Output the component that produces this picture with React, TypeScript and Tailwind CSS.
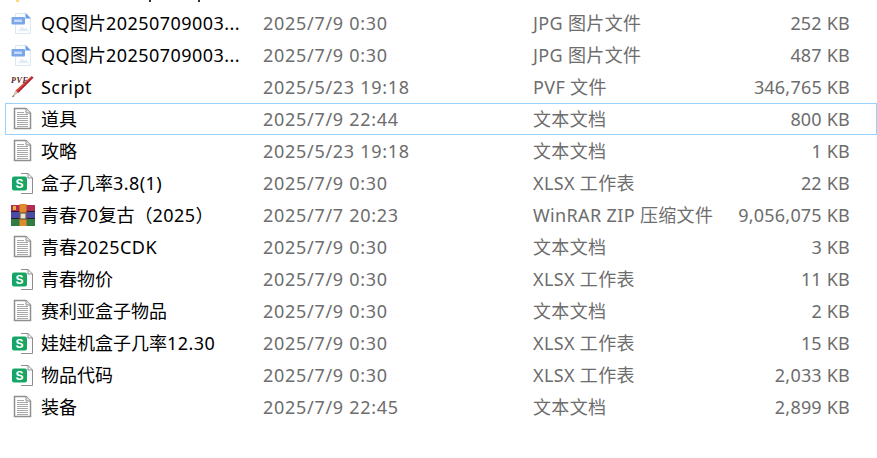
import type { ReactNode } from 'react';

function JpgIcon() {
  return (
    <svg width="24" height="24" viewBox="0 0 24 24">
      <path d="M4.5 2.5H15L19.5 7V22.5H4.5Z" fill="#fbfdff" stroke="#dbe7f6" />
      <path d="M14.5 2L20 7.5H14.5Z" fill="#6f9fe3" />
      <rect x="0.5" y="6" width="13.5" height="7.5" rx="1" fill="#7aa6ea" />
      <rect x="3" y="8.5" width="8" height="2.5" fill="#c7dafa" />
      <path d="M7 20L11 15.5L13.5 18L15 16.5L18 20Z" fill="#e2ecf9" />
    </svg>
  );
}

function PvfIcon() {
  return (
    <svg width="24" height="24" viewBox="0 0 24 24">
      <path d="M22.5 2.5L7 18L4.5 15.5L20.5 1Z" fill="#d8403c" />
      <path d="M22.5 2.5L7 18L6 17L21.5 1.8Z" fill="#a8282a" />
      <path d="M4.5 15.5L7 18L1 22.5Z" fill="#d4c0aa" />
      <path d="M1 22.5L2.3 20L3.5 21.2Z" fill="#666" />
      <text x="0" y="8" fontSize="8" letterSpacing="0.6" fontFamily="Liberation Serif, serif" fontStyle="italic" fontWeight="700" fill="#5a1c1c">
        PVF
      </text>
    </svg>
  );
}

function TextIcon() {
  return (
    <svg width="24" height="24" viewBox="0 0 24 24">
      <path d="M3.5 1.5H15L19.5 6V21.5H3.5Z" fill="#fff" stroke="#8f8f8f" strokeWidth="1.5" />
      <path d="M15 1.5V6H19.5" fill="#e6e6e6" stroke="#8f8f8f" />
      <path d="M6 5.5H13M6 7.5H17M6 9.5H17M6 11.5H17M6 13.5H17M6 15.5H17M6 17.5H17M6 19.5H17" stroke="#a8a8a8" />
    </svg>
  );
}

function SheetIcon() {
  return (
    <svg width="24" height="24" viewBox="0 0 24 24">
      <path d="M10 2.5H17L21.5 7V22.5H10" fill="#fff" stroke="#8d8d8d" />
      <path d="M17 2.5V7H21.5" fill="none" stroke="#8d8d8d" />
      <rect x="1" y="5.5" width="15" height="14" rx="2" fill="#17a566" />
      <text x="8.5" y="17" textAnchor="middle" fontSize="12" fontWeight="700" fontFamily="Liberation Sans, sans-serif" fill="#fff">
        S
      </text>
    </svg>
  );
}

function RarIcon() {
  return (
    <svg width="24" height="24" viewBox="0 0 24 24">
      <rect x="0" y="2" width="24" height="7" fill="#b22d4f" />
      <rect x="0" y="9" width="24" height="7" fill="#4a4ba6" />
      <rect x="0" y="16" width="24" height="7" fill="#2f7d43" />
      <path d="M0 8.5H24M0 15.5H24" stroke="#2a1a2a" />
      <rect x="8.5" y="1" width="7" height="22" fill="#e08a2c" />
      <rect x="9" y="10" width="6" height="6" fill="#e8e4da" stroke="#55402c" />
      <rect x="2" y="3" width="3" height="4" fill="#e8b13a" />
    </svg>
  );
}

type Row = { icon: ReactNode; name: string; date: string; type: string; size: string; selected?: boolean };

const rows: Row[] = [
  { icon: <JpgIcon />, name: 'QQ图片20250709003...', date: '2025/7/9 0:30', type: 'JPG 图片文件', size: '252 KB' },
  { icon: <JpgIcon />, name: 'QQ图片20250709003...', date: '2025/7/9 0:30', type: 'JPG 图片文件', size: '487 KB' },
  { icon: <PvfIcon />, name: 'Script', date: '2025/5/23 19:18', type: 'PVF 文件', size: '346,765 KB' },
  { icon: <TextIcon />, name: '道具', date: '2025/7/9 22:44', type: '文本文档', size: '800 KB', selected: true },
  { icon: <TextIcon />, name: '攻略', date: '2025/5/23 19:18', type: '文本文档', size: '1 KB' },
  { icon: <SheetIcon />, name: '盒子几率3.8(1)', date: '2025/7/9 0:30', type: 'XLSX 工作表', size: '22 KB' },
  { icon: <RarIcon />, name: '青春70复古（2025）', date: '2025/7/7 20:23', type: 'WinRAR ZIP 压缩文件', size: '9,056,075 KB' },
  { icon: <TextIcon />, name: '青春2025CDK', date: '2025/7/9 0:30', type: '文本文档', size: '3 KB' },
  { icon: <SheetIcon />, name: '青春物价', date: '2025/7/9 0:30', type: 'XLSX 工作表', size: '11 KB' },
  { icon: <TextIcon />, name: '赛利亚盒子物品', date: '2025/7/9 0:30', type: '文本文档', size: '2 KB' },
  { icon: <SheetIcon />, name: '娃娃机盒子几率12.30', date: '2025/7/9 0:30', type: 'XLSX 工作表', size: '15 KB' },
  { icon: <SheetIcon />, name: '物品代码', date: '2025/7/9 0:30', type: 'XLSX 工作表', size: '2,033 KB' },
  { icon: <TextIcon />, name: '装备', date: '2025/7/9 22:45', type: '文本文档', size: '2,899 KB' },
];

// latin runs sit a bit wider than Noto's metrics, the CJK ones don't
function Name({ text }: { text: string }) {
  const runs = text.split(/([\x20-\x7e]+)/).filter(Boolean);
  return (
    <>
      {runs.map((run, i) =>
        /^[\x20-\x7e]/.test(run) ? (
          <span key={i} className="tracking-[0.45px]">
            {run}
          </span>
        ) : (
          <span key={i}>{run}</span>
        ),
      )}
    </>
  );
}

export default function App() {
  return (
    <div className="h-[458px] w-[877px] overflow-hidden bg-white font-['Noto_Sans','Noto_Sans_CJK_SC',sans-serif] text-[18px] leading-none">
      {/* bottom edge of the row scrolled out of view */}
      <div className="flex h-[2px]">
        <span className="ml-[16px] w-[3px] bg-[#ffd87a]" />
        <span className="ml-[130px] w-[2px] bg-[#333333]" />
        <span className="ml-[47px] w-[2px] bg-[#333333]" />
      </div>
      <div className="pt-[5px]">
        {rows.map((row, index) => (
          <div
            key={index}
            className={`ml-[5px] flex h-[32px] items-center border ${
              row.selected ? 'border-[#99d1ff]' : 'border-transparent'
            }`}
          >
            <div className="flex w-[35px] shrink-0 pl-[5px]">{row.icon}</div>
            <div className="w-[222px] shrink-0 whitespace-nowrap text-black">
              <Name text={row.name} />
            </div>
            <div className="w-[270px] shrink-0 whitespace-nowrap tracking-[0.7px] text-[#6d6d6d]">{row.date}</div>
            <div className="w-[200px] shrink-0 whitespace-nowrap tracking-[0.35px] text-[#6d6d6d]">{row.type}</div>
            <div className="w-[117px] shrink-0 whitespace-nowrap text-right tracking-[0.2px] text-[#6d6d6d]">{row.size}</div>
          </div>
        ))}
      </div>
    </div>
  );
}
